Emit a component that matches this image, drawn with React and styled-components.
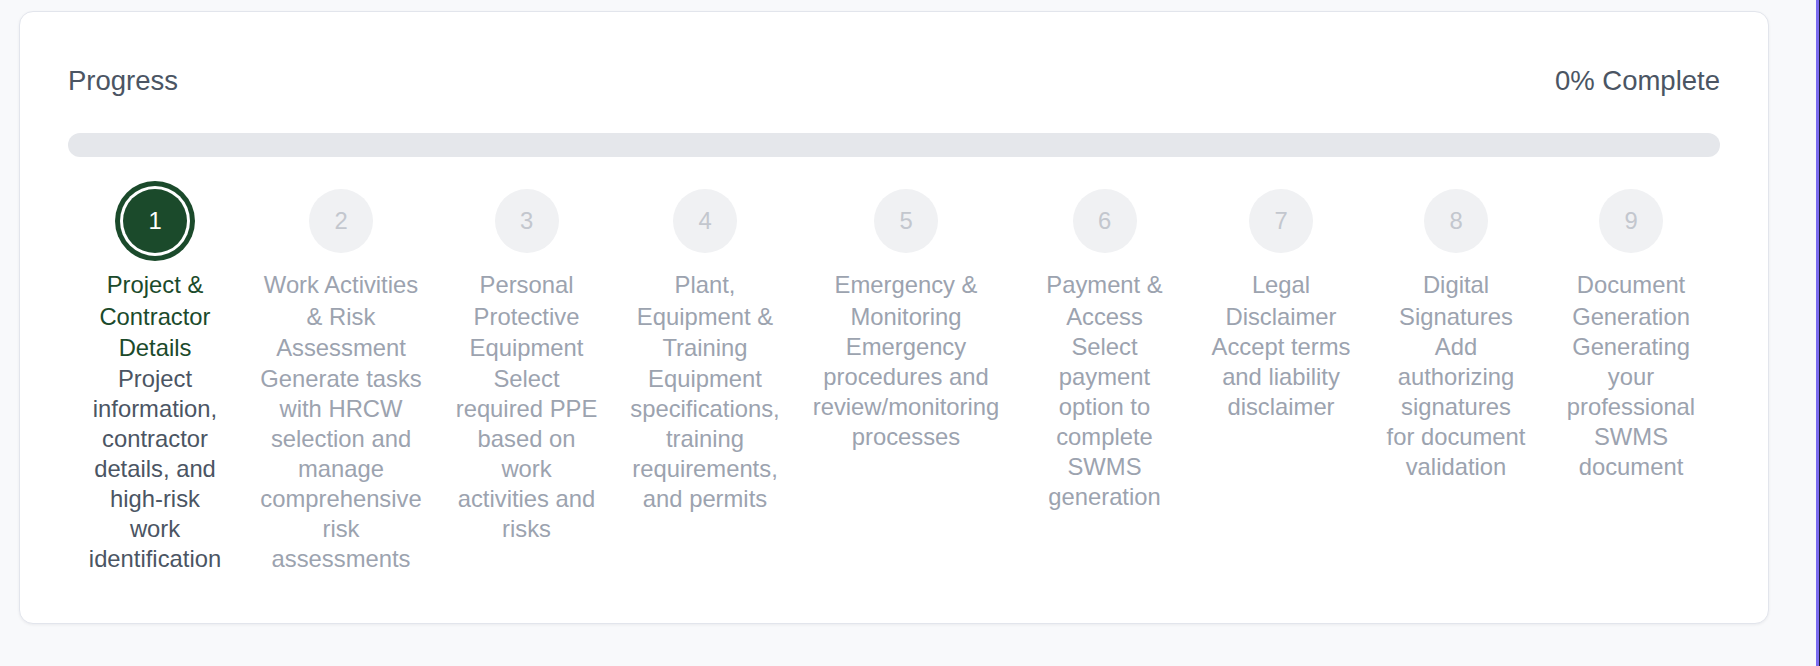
import React from "react";
import styled, { createGlobalStyle } from "styled-components";

const GlobalStyle = createGlobalStyle`
  body {
    margin: 0;
    background: #f8f9fb;
    font-family: "Liberation Sans", Arial, Helvetica, sans-serif;
  }
`;

const steps = [
  {
    title: "Project & Contractor Details",
    description:
      "Project information, contractor details, and high-risk work identification",
    w: 174,
    text: 140,
  },
  {
    title: "Work Activities & Risk Assessment",
    description:
      "Generate tasks with HRCW selection and manage comprehensive risk assessments",
    w: 198,
    text: 166,
  },
  {
    title: "Personal Protective Equipment",
    description: "Select required PPE based on work activities and risks",
    w: 173,
    text: 143,
  },
  {
    title: "Plant, Equipment & Training",
    description:
      "Equipment specifications, training requirements, and permits",
    w: 184,
    text: 160,
  },
  {
    title: "Emergency & Monitoring",
    description: "Emergency procedures and review/monitoring processes",
    w: 218,
    text: 200,
  },
  {
    title: "Payment & Access",
    description: "Select payment option to complete SWMS generation",
    w: 179,
    text: 147,
  },
  {
    title: "Legal Disclaimer",
    description: "Accept terms and liability disclaimer",
    w: 174,
    text: 142,
  },
  {
    title: "Digital Signatures",
    description: "Add authorizing signatures for document validation",
    w: 176,
    text: 141,
  },
  {
    title: "Document Generation",
    description: "Generating your professional SWMS document",
    w: 174,
    text: 142,
  },
];

export default function App() {
  const currentStep = 0;
  const percent = Math.round((currentStep / steps.length) * 100);

  return (
    <Page>
      <GlobalStyle />
      <Card>
        <Header>
          <span>Progress</span>
          <span>{percent}% Complete</span>
        </Header>
        <Track>
          <Fill style={{ width: `${percent}%` }} />
        </Track>
        <Steps>
          {steps.map((step, i) => {
            const active = i === currentStep;
            return (
              <Step key={step.title} $w={step.w}>
                <Circle $active={active}>{i + 1}</Circle>
                <Title $active={active} $text={step.text}>
                  {step.title}
                </Title>
                <Description $active={active} $text={step.text}>
                  {step.description}
                </Description>
              </Step>
            );
          })}
        </Steps>
      </Card>
    </Page>
  );
}

const Page = styled.div`
  min-height: 100vh;
  box-sizing: border-box;
  padding: 11px 50px 44px 19px;
  border-right: 1px solid #221f3a;
  box-shadow: inset -3px 0 0 #7b6cf0;
`;

const Card = styled.div`
  background: #fff;
  border: 1px solid #e2e5ec;
  border-radius: 14px;
  padding: 49px 48px 49px;
  box-shadow: 0 1px 3px rgba(16, 24, 40, 0.06);
`;

const Header = styled.div`
  display: flex;
  justify-content: space-between;
  font-size: 27.5px;
  line-height: 40px;
  color: #4b5563;
`;

const Track = styled.div`
  margin-top: 32px;
  height: 24px;
  border-radius: 12px;
  background: #e5e7eb;
  overflow: hidden;
`;

const Fill = styled.div`
  height: 100%;
  background: #1b4a2b;
`;

const Steps = styled.div`
  margin-top: 32px;
  display: flex;
`;

const Step = styled.div`
  flex: 0 0 ${(p) => p.$w}px;
  display: flex;
  flex-direction: column;
  align-items: center;
  text-align: center;
  font-size: 23.8px;
`;

const Circle = styled.div`
  width: 64px;
  height: 64px;
  border-radius: 50%;
  display: flex;
  align-items: center;
  justify-content: center;
  font-size: 23.8px;
  background: ${(p) => (p.$active ? "#1b4a2b" : "#f0f1f3")};
  color: ${(p) => (p.$active ? "#ffffff" : "#c3c7ce")};
  box-shadow: ${(p) =>
    p.$active ? "0 0 0 3px #ffffff, 0 0 0 8px #1b4a2b" : "none"};
`;

const Title = styled.div`
  margin-top: 16px;
  width: ${(p) => p.$text}px;
  line-height: 31.5px;
  color: ${(p) => (p.$active ? "#1b4a2b" : "#9ca3af")};
`;

const Description = styled.div`
  width: ${(p) => p.$text}px;
  line-height: 30px;
  color: ${(p) => (p.$active ? "#4b5563" : "#9ca3af")};
`;
